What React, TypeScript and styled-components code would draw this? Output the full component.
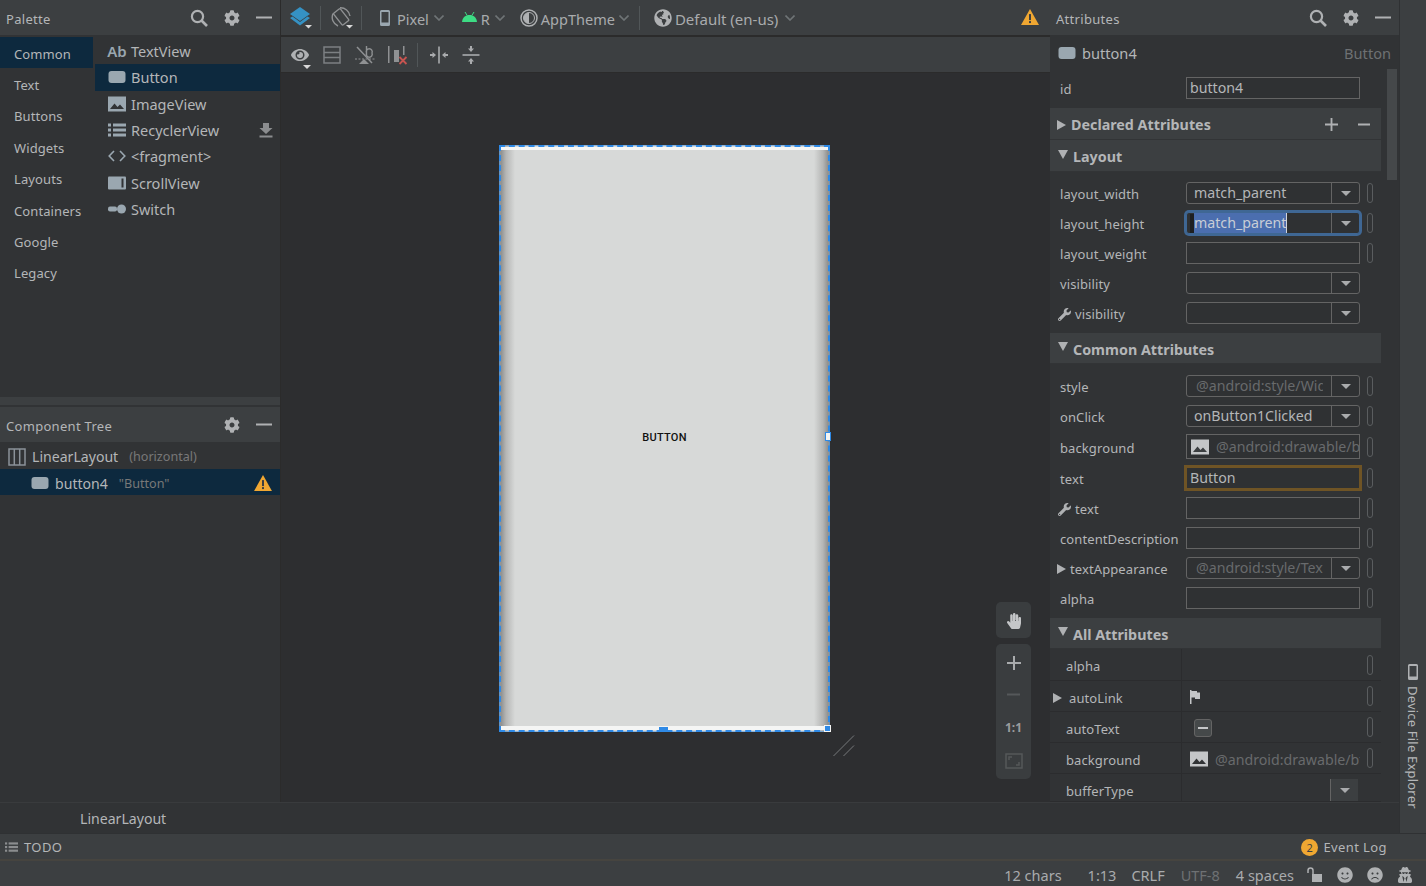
import React from 'react';
import styled, { createGlobalStyle } from 'styled-components';
import { FaCog, FaEye, FaFrown, FaGlobeAmericas, FaHandPaper, FaSmile, FaUserSecret, FaWrench } from 'react-icons/fa';

const GlobalStyle = createGlobalStyle`
  html, body { margin: 0; padding: 0; background: #3c3f41; overflow: hidden; }
  #root { width: 1426px; height: 886px; }
  * { box-sizing: border-box; }
  body { font-family: "Noto Sans", "Open Sans", sans-serif; color: #bbbbbb; }
`;

const Page = styled.div`
  width: 1426px;
  height: 886px;
  display: flex;
  flex-direction: column;
  overflow: hidden;
`;

const Upper = styled.div`
  height: 833px;
  display: flex;
`;

const MainColumn = styled.div`
  width: 1399px;
  display: flex;
  flex-direction: column;
`;

const Panels = styled.div`
  height: 802px;
  display: flex;
  background: #2b2b2b;
  overflow: hidden;
`;

const LeftPanel = styled.div`
  width: 280px;
  flex: none;
  display: flex;
  flex-direction: column;
  background: #313335;
`;

const ToolHeader = styled.div`
  height: 35px;
  flex: none;
  display: flex;
  align-items: center;
  padding: 0 8px 0 6px;
  background: #3c3f41;
  font-size: 13px;
  letter-spacing: 0.3px;
  color: #b4b6b8;
`;

const HeaderTitle = styled.span`
  flex: 1;
  padding-top: 3px;
`;

const HeaderIcons = styled.div`
  display: flex;
  align-items: center;
  gap: 16px;
  color: #afb1b3;
`;

const PaletteBody = styled.div`
  height: 360px;
  margin-top: 2px;
  flex: none;
  display: flex;
`;

const Categories = styled.div`
  width: 93px;
  margin-right: 2px;
  flex: none;
`;

const Category = styled.div<{ $active?: boolean }>`
  height: 31.4px;
  display: flex;
  align-items: center;
  padding: 2px 0 0 14px;
  font-size: 13px;
  letter-spacing: 0.1px;
  background: ${p => (p.$active ? '#0d293e' : 'transparent')};
  color: #b4b6b8;
`;

const Items = styled.div`
  flex: 1;
  padding-top: 1px;
`;

const PaletteItem = styled.div<{ $active?: boolean }>`
  height: 26.3px;
  display: flex;
  align-items: center;
  gap: 5px;
  padding: 0 7px 0 13px;
  font-size: 14.5px;
  color: #b4b6b8;
  background: ${p => (p.$active ? '#0d293e' : 'transparent')};
`;

const ItemGlyph = styled.span`
  width: 18px;
  flex: none;
  display: flex;
  align-items: center;
  justify-content: center;
  color: #9aa7b0;
  font-size: 15px;
  font-weight: 600;
  white-space: nowrap;
`;

const Spacer = styled.span`
  flex: 1;
`;

const Gap = styled.span<{ $w: number }>`
  width: ${p => p.$w}px;
  flex: none;
`;

const SplitBand = styled.div`
  height: 8px;
  flex: none;
  background: #3c3f41;
  margin-bottom: 2px;
`;

const Splitter = styled.div`
  flex: 1;
  display: flex;
  flex-direction: column;
`;

const TreeRow = styled.div<{ $active?: boolean; $indent: number; $h: number }>`
  height: ${p => p.$h}px;
  flex: none;
  display: flex;
  align-items: center;
  gap: 6px;
  padding: 2px 8px 0 ${p => p.$indent}px;
  font-size: 14.1px;
  color: #b4b6b8;
  background: ${p => (p.$active ? '#0d293e' : 'transparent')};
`;

const TreeHint = styled.span`
  margin-left: 5px;
  font-size: 12.6px;
  color: #787878;
`;

const Center = styled.div`
  width: 769px;
  margin-left: 1px;
  flex: none;
  display: flex;
  flex-direction: column;
`;

const ToolRow = styled.div<{ $h: number }>`
  height: ${p => p.$h}px;
  flex: none;
  display: flex;
  align-items: center;
  background: #3c3f41;
  color: #afb1b3;
  font-size: 14.5px;
`;

const ToolItem = styled.div<{ $ml: number }>`
  position: relative;
  margin-left: ${p => p.$ml}px;
  display: flex;
  align-items: center;
  flex: none;
`;

const ToolText = styled.span<{ $ml?: number; $fs?: number }>`
  margin-left: ${p => p.$ml ?? 0}px;
  font-size: ${p => p.$fs ?? 14.5}px;
  color: #a9abad;
  padding-top: 3px;
`;

const ToolDivider = styled.div<{ $ml: number }>`
  margin-left: ${p => p.$ml}px;
  width: 1px;
  height: 24px;
  flex: none;
  background: #515658;
`;

const RowGap = styled.div`
  height: 2px;
  flex: none;
  background: #2b2b2b;
`;

const Canvas = styled.div`
  position: relative;
  flex: 1;
  background: #2d2e30;
  border-top: 1px solid #2b2b2b;
`;

const Phone = styled.div`
  position: absolute;
  left: 218px;
  top: 72px;
  width: 331px;
  height: 587px;
  display: flex;
  align-items: center;
  justify-content: center;
  padding-bottom: 3px;
  border: 2px dashed #2f8ae6;
  background:
    linear-gradient(#f4f5f4, #f4f5f4) top / 100% 3px no-repeat,
    linear-gradient(#f4f5f4, #f4f5f4) bottom / 100% 4px no-repeat,
    linear-gradient(90deg, #8f908f 0, #b5b6b5 5px, #d7d9d8 14px, #d7d9d8 calc(100% - 14px), #b5b6b5 calc(100% - 5px), #8f908f 100%);
  outline: 1px solid rgba(47, 138, 230, 0.45);
  outline-offset: -1px;
`;

const PhoneLabel = styled.span`
  font-family: Roboto, "Liberation Sans", sans-serif;
  font-size: 11px;
  font-weight: 500;
  letter-spacing: 0.3px;
  color: #111;
`;

const Handle = styled.div<{ $x: number; $y: number; $w: number; $h: number; $fill: string; $edge?: string }>`
  position: absolute;
  left: ${p => p.$x}px;
  top: ${p => p.$y}px;
  width: ${p => p.$w}px;
  height: ${p => p.$h}px;
  background: ${p => p.$fill};
  border: 1px solid ${p => p.$edge ?? '#2f8ae6'};
`;

const ResizeMark = styled.svg`
  position: absolute;
  left: 552px;
  top: 662px;
`;

const ZoomGroup = styled.div<{ $top: number; $h: number }>`
  position: absolute;
  left: 715px;
  top: ${p => p.$top}px;
  width: 35px;
  height: ${p => p.$h}px;
  display: flex;
  flex-direction: column;
  align-items: center;
  justify-content: space-around;
  padding: 4px 0 2px;
  background: #3a3d3f;
  border-radius: 5px;
  color: #a9abad;
`;

const OneToOne = styled.span`
  font-size: 12px;
  font-weight: 700;
  color: #9a9c9e;
`;

const RightPanel = styled.div`
  position: relative;
  width: 349px;
  flex: none;
  background: #313335;
`;

const AttrTitleRow = styled.div`
  height: 34px;
  margin-top: 1px;
  display: flex;
  align-items: center;
  padding: 0 8px;
  gap: 6px;
  font-size: 14.6px;
  color: #b4b6b8;
`;

const AttrType = styled.span`
  margin-left: auto;
  color: #6e7173;
`;

const Scrollbar = styled.div`
  position: absolute;
  left: 337px;
  top: 69px;
  width: 10px;
  height: 111px;
  background: #45484a;
`;

const Sections = styled.div`
  width: 331px;
`;

const AttrRow = styled.div<{ $h: number; $pb?: number }>`
  height: ${p => p.$h}px;
  display: flex;
  align-items: center;
  padding-bottom: ${p => p.$pb ?? 0}px;
`;

const AttrLabel = styled.div<{ $pl?: number }>`
  width: 136px;
  flex: none;
  display: flex;
  align-items: center;
  gap: 4px;
  padding-top: 2px;
  padding-left: ${p => p.$pl ?? 10}px;
  font-size: 13px;
  letter-spacing: 0.1px;
  color: #b4b6b8;
  white-space: nowrap;
`;

const Field = styled.div<{ $focus?: 'blue' | 'amber'; $round?: boolean; $h?: number }>`
  width: 174px;
  height: ${p => p.$h ?? 22}px;
  flex: none;
  display: flex;
  align-items: stretch;
  border: 1px solid ${p => (p.$focus === 'amber' ? '#6f5425' : p.$focus === 'blue' ? '#3f6794' : '#646464')};
  border-radius: ${p => (p.$round || p.$focus === 'blue' ? 3 : 0)}px;
  background: #2f3133;
  box-shadow: ${p => (p.$focus === 'amber' ? '0 0 0 2px #6f5425' : p.$focus === 'blue' ? '0 0 0 2px #3f6794' : 'none')};
`;

const FieldValue = styled.div<{ $dim?: boolean; $pl?: number; $mr?: number }>`
  flex: 1;
  min-width: 0;
  display: flex;
  align-items: center;
  gap: 7px;
  padding-left: ${p => p.$pl ?? 7}px;
  margin-right: ${p => p.$mr ?? 0}px;
  font-size: 14.2px;
  line-height: 20px;
  color: ${p => (p.$dim ? '#686a6c' : '#b4b6b8')};
  white-space: nowrap;
  overflow: hidden;
  svg { flex: none; }
`;

const Selected = styled.span`
  background: #4b6eaf;
  color: #c8cdd6;
  border-right: 1px solid #d0d4dc;
  line-height: 20px;
`;

const Gutter = styled.span`
  width: 4px;
  height: 19px;
  flex: none;
  margin: 0 -7px 0 1px;
  background: #1e2022;
`;

const DropButton = styled.div<{ $bare?: boolean }>`
  width: 28px;
  flex: none;
  display: flex;
  align-items: center;
  justify-content: center;
  border-left: 1px solid #646464;
  background: ${p => (p.$bare ? '#3c3f41' : 'transparent')};
`;

const DropArrow = styled.span`
  width: 0;
  height: 0;
  border-left: 5px solid transparent;
  border-right: 5px solid transparent;
  border-top: 5px solid #a9abad;
`;

const Pill = styled.span`
  width: 6px;
  height: 20px;
  margin-left: 7px;
  flex: none;
  border: 1px solid #5a5d5f;
  border-radius: 3px;
`;

const SectionHead = styled.div<{ $h: number; $mt?: number }>`
  height: ${p => p.$h}px;
  margin-top: ${p => p.$mt ?? 0}px;
  display: flex;
  align-items: center;
  gap: 5px;
  padding: 2px 11px 0 7px;
  background: #3c3f41;
  font-size: 14.3px;
  font-weight: 700;
  color: #b4b6b8;
  border-bottom: 1px solid #323436;
`;

const Tri = styled.span<{ $open?: boolean }>`
  width: 0;
  height: 0;
  flex: none;
  ${p =>
    p.$open
      ? `border-left: 5.5px solid transparent; border-right: 5.5px solid transparent; border-top: 9px solid #afb1b3; margin: -5px 0 0 1px;`
      : `border-top: 5px solid transparent; border-bottom: 5px solid transparent; border-left: 9px solid #afb1b3;`}
`;

const TableRow = styled.div<{ $h: number }>`
  height: ${p => p.$h}px;
  display: flex;
  align-items: center;
  border-bottom: 1px solid #2b2c2e;
  background: #313335;
`;

const TableName = styled.div<{ $pl?: number; $pt?: number }>`
  width: 132px;
  height: 100%;
  flex: none;
  display: flex;
  align-items: center;
  gap: 7px;
  padding-top: ${p => p.$pt ?? 3}px;
  padding-left: ${p => p.$pl ?? 16}px;
  font-size: 13px;
  letter-spacing: 0.1px;
  color: #b4b6b8;
  border-right: 1px solid #2b2c2e;
`;

const TableValue = styled.div`
  width: 178px;
  height: 100%;
  flex: none;
  display: flex;
  align-items: center;
  justify-content: flex-start;
  gap: 7px;
  padding: 2px 2px 0 8px;
  font-size: 14.2px;
  color: #686a6c;
  white-space: nowrap;
  overflow: hidden;
  svg { flex: none; }
`;

const TableDrop = styled(DropButton)`
  height: 22px;
  margin: 3px 0 0 auto;
`;

const MinusBox = styled.span`
  width: 18px;
  height: 18px;
  margin-left: 4px;
  display: flex;
  align-items: center;
  justify-content: center;
  border: 1px solid #646464;
  border-radius: 3px;
  background: #45494a;
  &::after {
    content: '';
    width: 10px;
    height: 2px;
    background: #c4c6c8;
  }
`;

const Breadcrumb = styled.div`
  flex: 1;
  display: flex;
  align-items: center;
  padding-left: 80px;
  background: #313335;
  font-size: 14.1px;
  color: #b4b6b8;
  border-top: 1px solid #393b3d;
`;

const SideStrip = styled.div`
  flex: 1;
  display: flex;
  flex-direction: column;
  align-items: center;
  justify-content: flex-end;
  gap: 6px;
  padding: 0 0 24px 0;
  background: #3c3f41;
  border-left: 1px solid #2f3133;
`;

const SideText = styled.span`
  writing-mode: vertical-rl;
  font-size: 13px;
  letter-spacing: 0.2px;
  color: #b4b6b8;
`;

const TodoBar = styled.div`
  height: 28px;
  display: flex;
  align-items: center;
  padding: 1px 39px 0 5px;
  background: #3c3f41;
  border-top: 1px solid #2f3133;
  border-bottom: 2px solid #46443f;
  font-size: 13px;
  letter-spacing: 0.4px;
  color: #b4b6b8;
`;

const TodoLabel = styled.span`
  margin-left: 6px;
`;

const Badge = styled.span`
  width: 17px;
  height: 17px;
  margin-right: 5px;
  display: flex;
  align-items: center;
  justify-content: center;
  border-radius: 50%;
  background: #f0a732;
  color: #3c3f41;
  font-size: 11px;
`;

const StatusBar = styled.div`
  flex: 1;
  display: flex;
  align-items: center;
  justify-content: flex-end;
  padding: 2px 13px 0 0;
  background: #3c3f41;
  font-size: 14.5px;
  color: #a9abad;
`;

const StatusText = styled.span<{ $mr: number; $dim?: boolean }>`
  margin-right: ${p => p.$mr}px;
  color: ${p => (p.$dim ? '#6e7173' : '#a9abad')};
`;

const StatusIcon = styled.span<{ $mr: number }>`
  display: flex;
  margin-right: ${p => p.$mr}px;
  color: #afb1b3;
`;

const EyeCaret = styled.span`
  position: absolute;
  right: -2px;
  bottom: -5px;
  width: 0;
  height: 0;
  border-left: 4px solid transparent;
  border-right: 4px solid transparent;
  border-top: 4px solid #d8d8d8;
`;

const ChevronSvg = styled.svg<{ $ml: number }>`
  margin-left: ${p => p.$ml}px;
`;

const SpreadSvg = styled.svg<{ $rotated?: boolean }>`
  transform: ${p => (p.$rotated ? 'rotate(90deg)' : 'none')};
`;

const SearchIcon = () => (
  <svg width="18" height="18" viewBox="0 0 18 18" fill="none" stroke="#afb1b3" strokeWidth="2.2">
    <circle cx="7.5" cy="7.5" r="5.6" />
    <path d="M11.5 11.5 L17 17" strokeWidth="2.6" />
  </svg>
);

const MinusIcon = ({ size = 16, fill = '#afb1b3' }: { size?: number; fill?: string }) => (
  <svg width={size} height="16" viewBox={`0 0 ${size} 16`}>
    <rect x="0" y="6.5" width={size} height="2" fill={fill} />
  </svg>
);

const PlusIcon = ({ size = 14, fill = '#afb1b3' }: { size?: number; fill?: string }) => (
  <svg width={size} height={size} viewBox="0 0 14 14">
    <path d="M6 0h2v6h6v2H8v6H6V8H0V6h6z" fill={fill} />
  </svg>
);

const ButtonIcon = () => (
  <svg width="18" height="14" viewBox="0 0 18 14">
    <rect x="0.5" y="1" width="17" height="12" rx="3" fill="#9aa7b0" />
  </svg>
);

const ImageIcon = ({ fill = '#9aa7b0', hole = '#313335' }: { fill?: string; hole?: string }) => (
  <svg width="18" height="16" viewBox="0 0 18 16">
    <rect x="0" y="0.5" width="18" height="15" fill={fill} />
    <path d="M2 13 L6.5 7.5 L9.5 11 L12 8.5 L16 13 Z" fill={hole} />
  </svg>
);

const ListIcon = ({ fill = '#9aa7b0', width = 18 }: { fill?: string; width?: number }) => (
  <svg width={width} height={width * 0.78} viewBox="0 0 18 14" fill={fill}>
    <rect x="0" y="0.5" width="3" height="3" />
    <rect x="5" y="0.5" width="13" height="3" />
    <rect x="0" y="5.5" width="3" height="3" />
    <rect x="5" y="5.5" width="13" height="3" />
    <rect x="0" y="10.5" width="3" height="3" />
    <rect x="5" y="10.5" width="13" height="3" />
  </svg>
);

const CodeIcon = () => (
  <svg width="18" height="12" viewBox="0 0 18 12" fill="none" stroke="#9aa7b0" strokeWidth="1.6">
    <path d="M6 1 L1.2 6 L6 11 M12 1 L16.8 6 L12 11" />
  </svg>
);

const ScrollIcon = () => (
  <svg width="18" height="14" viewBox="0 0 18 14">
    <rect x="0" y="0.5" width="18" height="13" rx="1" fill="#9aa7b0" />
    <rect x="13.5" y="2.5" width="2" height="9" fill="#313335" />
  </svg>
);

const SwitchIcon = () => (
  <svg width="18" height="10" viewBox="0 0 18 10">
    <rect x="0" y="2.5" width="9" height="5" rx="2" fill="#9aa7b0" />
    <circle cx="13.5" cy="5" r="4.5" fill="#9aa7b0" />
  </svg>
);

const DownloadIcon = () => (
  <svg width="14" height="15" viewBox="0 0 14 15" fill="#8b8d8f">
    <path d="M4 0h6v5h3.5L7 11 .5 5H4z" />
    <rect x="0.5" y="12.5" width="13" height="2" />
  </svg>
);

const ColumnsIcon = () => (
  <svg width="18" height="18" viewBox="0 0 18 18" fill="none" stroke="#8b9299" strokeWidth="1.5">
    <rect x="1" y="1" width="16" height="16" />
    <path d="M6.3 1V17M11.7 1V17" />
  </svg>
);

const WarnIcon = ({ size = 18 }: { size?: number }) => (
  <svg width={size} height={size * 0.9} viewBox="0 0 18 16">
    <path d="M9 0 L18 16 H0 Z" fill="#f0a732" />
    <rect x="8" y="5" width="2" height="6" fill="#3c3f41" />
    <rect x="8" y="12" width="2" height="2" fill="#3c3f41" />
  </svg>
);

const LayersIcon = () => (
  <svg width="22" height="22" viewBox="0 0 22 22">
    <path d="M10 0 L20 7 L10 14 L0 7 Z" fill="#3592c4" />
    <path d="M0 11 L2.5 9.5 L10 15 L17.5 9.5 L20 11 L10 18.5 Z" fill="#3592c4" />
    <path d="M15 18 H22 L18.5 21.5 Z" fill="#d8d8d8" />
  </svg>
);

const RotateIcon = () => (
  <svg width="22" height="22" viewBox="0 0 22 22" fill="none" stroke="#8f9193" strokeWidth="1.4">
    <rect x="6" y="2.5" width="8.5" height="15" rx="1" transform="rotate(-38 10 10)" />
    <path d="M2 6.5 A9.5 9.5 0 0 0 7 19" />
    <path d="M9 0.8 A9.5 9.5 0 0 1 19 9" />
    <path d="M15 18 H22 L18.5 21.5 Z" fill="#d8d8d8" stroke="none" />
  </svg>
);

const PhoneIcon = ({ width = 10, height = 16, fill = '#9aa7b0' }: { width?: number; height?: number; fill?: string }) => (
  <svg width={width} height={height} viewBox="0 0 10 16">
    <path fillRule="evenodd" d="M1.5 0h7A1.5 1.5 0 0 1 10 1.5v13A1.5 1.5 0 0 1 8.5 16h-7A1.5 1.5 0 0 1 0 14.5v-13A1.5 1.5 0 0 1 1.5 0zM1.5 2v10.5h7V2z" fill={fill} />
  </svg>
);

const AndroidIcon = () => (
  <svg width="15" height="11" viewBox="0 0 15 11" fill="#3ddc84">
    <path d="M0 10 C0.4 5.5 3.5 3 7.5 3 C11.5 3 14.6 5.5 15 10 Z" />
    <path d="M3 0 L5.2 3.5 M12 0 L9.8 3.5" stroke="#3ddc84" strokeWidth="1" />
  </svg>
);

const ThemeIcon = () => (
  <svg width="18" height="18" viewBox="0 0 18 18">
    <circle cx="9" cy="9" r="8" fill="none" stroke="#afb1b3" strokeWidth="1.5" />
    <path d="M9 3.5 A5.5 5.5 0 0 0 9 14.5 Z" fill="#afb1b3" />
    <circle cx="9" cy="9" r="5.5" fill="none" stroke="#afb1b3" strokeWidth="1" />
  </svg>
);

const Chevron = ({ ml = 5 }: { ml?: number }) => (
  <ChevronSvg $ml={ml} width="10" height="6" viewBox="0 0 10 6" fill="none" stroke="#6f7476" strokeWidth="1.6">
    <path d="M0.5 0.5 L5 5 L9.5 0.5" />
  </ChevronSvg>
);

const TableIcon = () => (
  <svg width="18" height="18" viewBox="0 0 18 18" fill="none" stroke="#7c8083" strokeWidth="1.5">
    <rect x="1" y="1" width="16" height="16" />
    <path d="M1 6.5H17M1 11.5H17" />
  </svg>
);

const BaselineIcon = () => (
  <svg width="20" height="20" viewBox="0 0 20 20" fill="none" stroke="#8f9193">
    <path d="M2 2 L17 18" strokeWidth="1.5" />
    <path d="M11.5 1 V10 M11.5 8 A3 3 0 1 1 17 8 A3 3 0 1 1 11.5 8" strokeWidth="1.4" />
    <path d="M0 14H20" strokeWidth="1" strokeDasharray="2 1.5" />
    <path d="M4 19 L9 14 L14 19 Z" fill="#8f9193" stroke="none" />
  </svg>
);

const ErrorsIcon = () => (
  <svg width="20" height="20" viewBox="0 0 20 20">
    <rect x="0" y="1" width="1.5" height="17" fill="#8f9193" />
    <rect x="6" y="5" width="5" height="12" fill="#8f9193" />
    <rect x="15" y="1" width="1.5" height="9" fill="#8f9193" />
    <path d="M11.5 12 L18.5 19 M18.5 12 L11.5 19" stroke="#c75450" strokeWidth="1.8" />
  </svg>
);

const SpreadIcon = ({ rotated }: { rotated?: boolean }) => (
  <SpreadSvg $rotated={rotated} width="18" height="18" viewBox="0 0 18 18" fill="#a9abad">
    <rect x="8.2" y="0.5" width="1.6" height="17" />
    <path d="M0 8h2.5V6L6 9 2.5 12V10H0zM18 8h-2.5V6L12 9l3.5 3v-2H18z" />
  </SpreadSvg>
);

const FitIcon = () => (
  <svg width="18" height="16" viewBox="0 0 18 16" fill="none" stroke="#55585a" strokeWidth="1.5">
    <rect x="1" y="1" width="16" height="14" />
    <path d="M4 7V4H7M14 9V12H11" />
  </svg>
);

const FlagIcon = () => (
  <svg width="10" height="14" viewBox="0 0 10 14">
    <path d="M0 0H1.5V14H0zM1.5 1H7V2.5H10V9H5V7.5H1.5z" fill="#c4c6c8" />
  </svg>
);

const LockIcon = () => (
  <svg width="15" height="15" viewBox="0 0 15 15" fill="none" stroke="#afb1b3" strokeWidth="1.5">
    <path d="M1 6V3.5A2.5 2.5 0 0 1 6 3.5V7" />
    <rect x="5" y="7" width="10" height="8" fill="#afb1b3" stroke="none" />
  </svg>
);

const DropField = ({ value, dim, pl = 7 }: { value?: string; dim?: boolean; pl?: number }) => (
  <Field $round>
    <FieldValue $dim={dim} $pl={pl} $mr={dim ? 8 : 0}>{value}</FieldValue>
    <DropButton><DropArrow /></DropButton>
  </Field>
);

const Wrench = () => <FaWrench size={13} color="#afb1b3" />;

const App = () => {
  const categories = ['Common', 'Text', 'Buttons', 'Widgets', 'Layouts', 'Containers', 'Google', 'Legacy'];

  return (
    <Page>
      <GlobalStyle />
      <Upper>
        <MainColumn>
          <Panels>
            <LeftPanel>
              <ToolHeader>
                <HeaderTitle>Palette</HeaderTitle>
                <HeaderIcons>
                  <SearchIcon />
                  <FaCog size={16} />
                  <MinusIcon />
                </HeaderIcons>
              </ToolHeader>
              <PaletteBody>
                <Categories>
                  {categories.map((c, i) => (
                    <Category key={c} $active={i === 0}>{c}</Category>
                  ))}
                </Categories>
                <Items>
                  <PaletteItem><ItemGlyph>Ab</ItemGlyph>TextView</PaletteItem>
                  <PaletteItem $active><ItemGlyph><ButtonIcon /></ItemGlyph>Button</PaletteItem>
                  <PaletteItem><ItemGlyph><ImageIcon /></ItemGlyph>ImageView</PaletteItem>
                  <PaletteItem><ItemGlyph><ListIcon /></ItemGlyph>RecyclerView<Spacer /><DownloadIcon /></PaletteItem>
                  <PaletteItem><ItemGlyph><CodeIcon /></ItemGlyph>&lt;fragment&gt;</PaletteItem>
                  <PaletteItem><ItemGlyph><ScrollIcon /></ItemGlyph>ScrollView</PaletteItem>
                  <PaletteItem><ItemGlyph><SwitchIcon /></ItemGlyph>Switch</PaletteItem>
                </Items>
              </PaletteBody>
              <SplitBand />
              <Splitter>
                <ToolHeader>
                  <HeaderTitle>Component Tree</HeaderTitle>
                  <HeaderIcons>
                    <FaCog size={16} />
                    <MinusIcon />
                  </HeaderIcons>
                </ToolHeader>
                <TreeRow $indent={8} $h={27}><ColumnsIcon />LinearLayout<TreeHint>(horizontal)</TreeHint></TreeRow>
                <TreeRow $active $indent={31} $h={26}>
                  <ButtonIcon />button4<TreeHint>"Button"</TreeHint><Spacer /><WarnIcon />
                </TreeRow>
              </Splitter>
            </LeftPanel>

            <Center>
              <ToolRow $h={35}>
                <ToolItem $ml={9}><LayersIcon /></ToolItem>
                <ToolDivider $ml={8} />
                <ToolItem $ml={10}><RotateIcon /></ToolItem>
                <ToolDivider $ml={8} />
                <ToolItem $ml={18}><PhoneIcon /><ToolText $ml={7}>Pixel</ToolText><Chevron /></ToolItem>
                <ToolItem $ml={18}><AndroidIcon /><ToolText $ml={4}>R</ToolText><Chevron /></ToolItem>
                <ToolItem $ml={15}><ThemeIcon /><ToolText $ml={3}>AppTheme</ToolText><Chevron ml={4} /></ToolItem>
                <ToolDivider $ml={10} />
                <ToolItem $ml={14}><FaGlobeAmericas size={18} color="#afb1b3" /><ToolText $ml={3} $fs={15}>Default (en-us)</ToolText><Chevron ml={7} /></ToolItem>
                <Spacer />
                <ToolItem $ml={0}><WarnIcon /></ToolItem>
                <ToolItem $ml={11} />
              </ToolRow>
              <RowGap />
              <ToolRow $h={35}>
                <ToolItem $ml={10}><FaEye size={18} color="#afb1b3" /><EyeCaret /></ToolItem>
                <ToolItem $ml={14}><TableIcon /></ToolItem>
                <ToolItem $ml={14}><BaselineIcon /></ToolItem>
                <ToolItem $ml={13}><ErrorsIcon /></ToolItem>
                <ToolDivider $ml={9} />
                <ToolItem $ml={12}><SpreadIcon /></ToolItem>
                <ToolItem $ml={14}><SpreadIcon rotated /></ToolItem>
              </ToolRow>
              <Canvas>
                <Phone><PhoneLabel>BUTTON</PhoneLabel></Phone>
                <Handle $x={544} $y={359} $w={6} $h={9} $fill="#f4f5f4" />
                <Handle $x={378} $y={654} $w={9} $h={5} $fill="#2f8ae6" />
                <Handle $x={543} $y={652} $w={7} $h={7} $fill="#2f8ae6" $edge="#f4f5f4" />
                <ResizeMark width="22" height="22" viewBox="0 0 22 22" fill="none" stroke="#77797b" strokeWidth="1">
                  <path d="M0.5 21 L21 0.5 M10.5 21 L21 10.5" />
                </ResizeMark>
                <ZoomGroup $top={529} $h={36}><FaHandPaper size={16} color="#c4c6c8" /></ZoomGroup>
                <ZoomGroup $top={571} $h={135}>
                  <PlusIcon fill="#a9abad" />
                  <MinusIcon size={13} fill="#55585a" />
                  <OneToOne>1:1</OneToOne>
                  <FitIcon />
                </ZoomGroup>
              </Canvas>
            </Center>

            <RightPanel>
              <ToolHeader>
                <HeaderTitle>Attributes</HeaderTitle>
                <HeaderIcons>
                  <SearchIcon />
                  <FaCog size={16} />
                  <MinusIcon />
                </HeaderIcons>
              </ToolHeader>
              <AttrTitleRow><ButtonIcon />button4<AttrType>Button</AttrType></AttrTitleRow>
              <Scrollbar />
              <Sections>
                <AttrRow $h={38} $pb={2}>
                  <AttrLabel>id</AttrLabel>
                  <Field><FieldValue $pl={3}>button4</FieldValue></Field>
                </AttrRow>
                <SectionHead $h={32}>
                  <Tri />Declared Attributes<Spacer />
                  <PlusIcon size={13} />
                  <Gap $w={10} />
                  <MinusIcon size={12} />
                </SectionHead>
                <SectionHead $h={32}><Tri $open />Layout</SectionHead>
                <AttrRow $h={6} />
                <AttrRow $h={30}>
                  <AttrLabel>layout_width</AttrLabel>
                  <DropField value="match_parent" />
                  <Pill />
                </AttrRow>
                <AttrRow $h={30}>
                  <AttrLabel>layout_height</AttrLabel>
                  <Field $focus="blue">
                    <FieldValue $pl={2}><Gutter /><Selected>match_parent</Selected></FieldValue>
                    <DropButton><DropArrow /></DropButton>
                  </Field>
                  <Pill />
                </AttrRow>
                <AttrRow $h={30}>
                  <AttrLabel>layout_weight</AttrLabel>
                  <Field />
                  <Pill />
                </AttrRow>
                <AttrRow $h={30}>
                  <AttrLabel>visibility</AttrLabel>
                  <DropField />
                </AttrRow>
                <AttrRow $h={30}>
                  <AttrLabel $pl={8}><Wrench />visibility</AttrLabel>
                  <DropField />
                </AttrRow>

                <SectionHead $h={31} $mt={5}><Tri $open />Common Attributes</SectionHead>
                <AttrRow $h={7} />
                <AttrRow $h={30}>
                  <AttrLabel>style</AttrLabel>
                  <DropField value="@android:style/Widget" dim pl={9} />
                  <Pill />
                </AttrRow>
                <AttrRow $h={30}>
                  <AttrLabel>onClick</AttrLabel>
                  <DropField value="onButton1Clicked" />
                  <Pill />
                </AttrRow>
                <AttrRow $h={31}>
                  <AttrLabel>background</AttrLabel>
                  <Field $h={25}>
                    <FieldValue $dim $pl={4}><ImageIcon fill="#c4c6c8" hole="#3c3f41" />@android:drawable/btn</FieldValue>
                  </Field>
                  <Pill />
                </AttrRow>
                <AttrRow $h={31}>
                  <AttrLabel>text</AttrLabel>
                  <Field $focus="amber"><FieldValue $pl={3}>Button</FieldValue></Field>
                  <Pill />
                </AttrRow>
                <AttrRow $h={30}>
                  <AttrLabel $pl={8}><Wrench />text</AttrLabel>
                  <Field />
                  <Pill />
                </AttrRow>
                <AttrRow $h={30}>
                  <AttrLabel>contentDescription</AttrLabel>
                  <Field />
                  <Pill />
                </AttrRow>
                <AttrRow $h={30}>
                  <AttrLabel $pl={7}><Tri />textAppearance</AttrLabel>
                  <DropField value="@android:style/TextAppearance" dim pl={9} />
                  <Pill />
                </AttrRow>
                <AttrRow $h={30}>
                  <AttrLabel>alpha</AttrLabel>
                  <Field />
                  <Pill />
                </AttrRow>

                <SectionHead $h={31} $mt={5}><Tri $open />All Attributes</SectionHead>
                <TableRow $h={32}>
                  <TableName>alpha</TableName>
                  <TableValue />
                  <Pill />
                </TableRow>
                <TableRow $h={31}>
                  <TableName $pl={3}><Tri />autoLink</TableName>
                  <TableValue><FlagIcon /></TableValue>
                  <Pill />
                </TableRow>
                <TableRow $h={31}>
                  <TableName>autoText</TableName>
                  <TableValue><MinusBox /></TableValue>
                  <Pill />
                </TableRow>
                <TableRow $h={31}>
                  <TableName>background</TableName>
                  <TableValue><ImageIcon fill="#c4c6c8" />@android:drawable/btn</TableValue>
                  <Pill />
                </TableRow>
                <TableRow $h={28}>
                  <TableName $pt={6}>bufferType</TableName>
                  <TableValue><TableDrop $bare><DropArrow /></TableDrop></TableValue>
                </TableRow>
              </Sections>
            </RightPanel>
          </Panels>
          <Breadcrumb>LinearLayout</Breadcrumb>
        </MainColumn>
        <SideStrip>
          <PhoneIcon width={12} height={16} fill="#afb1b3" />
          <SideText>Device File Explorer</SideText>
        </SideStrip>
      </Upper>
      <TodoBar>
        <ListIcon fill="#8b8d8f" width={13} />
        <TodoLabel>TODO</TodoLabel>
        <Spacer />
        <Badge>2</Badge>
        Event Log
      </TodoBar>
      <StatusBar>
        <StatusText $mr={26}>12 chars</StatusText>
        <StatusText $mr={15}>1:13</StatusText>
        <StatusText $mr={16}>CRLF</StatusText>
        <StatusText $mr={16} $dim>UTF-8</StatusText>
        <StatusText $mr={13}>4 spaces</StatusText>
        <StatusIcon $mr={15}><LockIcon /></StatusIcon>
        <StatusIcon $mr={14}><FaSmile size={16} /></StatusIcon>
        <StatusIcon $mr={14}><FaFrown size={16} /></StatusIcon>
        <StatusIcon $mr={0}><FaUserSecret size={16} /></StatusIcon>
      </StatusBar>
    </Page>
  );
};

export default App;
